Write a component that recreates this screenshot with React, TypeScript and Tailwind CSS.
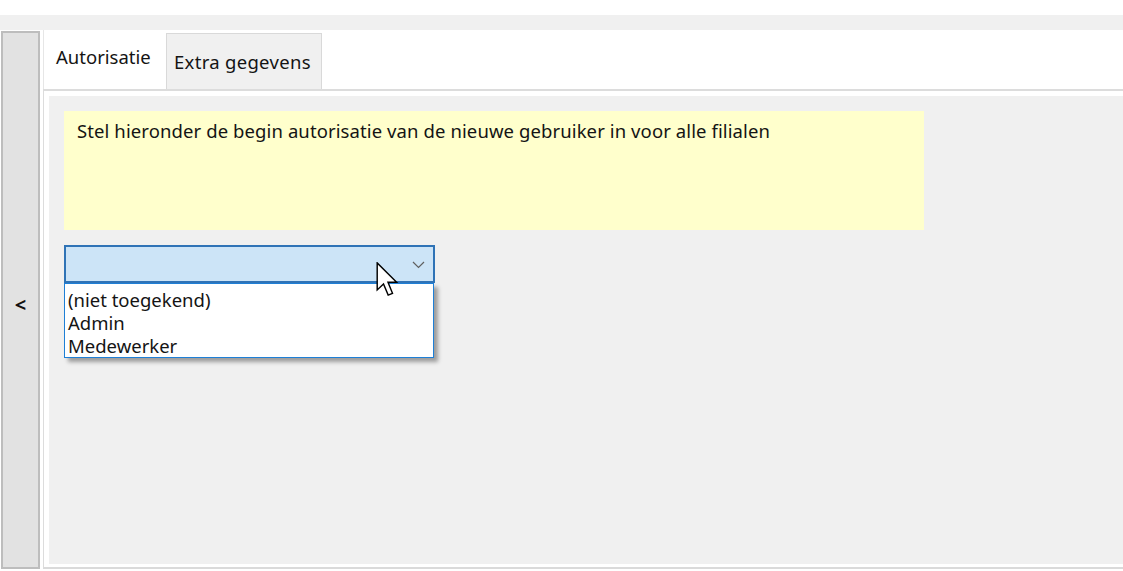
import React from "react";

export default function App() {
  const font = { fontFamily: '"Noto Sans", "Open Sans", Arial, sans-serif' };
  return (
    <div className="w-[1123px] h-[571px] bg-white flex flex-col overflow-hidden text-[#141414]" style={font}>
      <div className="h-[15px] bg-white shrink-0" />
      <div className="h-[15px] bg-[#f0f0f0] shrink-0" />
      <div className="flex flex-1 min-h-0">
        <div className="ml-[1px] mt-[1px] w-[39px] h-[538px] border-2 border-[#bdbdbd] bg-[#e2e2e2] flex items-center justify-center shrink-0">
          <span className="text-[20px] font-bold leading-none text-[#111] mt-[10px]">&lt;</span>
        </div>
        <div className="flex-1 flex flex-col ml-[3px] min-w-0">
          <div className="flex h-[59px] shrink-0 items-stretch">
            <div className="w-[123px] bg-white border-l border-[#e6e6e6] flex items-start pl-[12px] pt-[14px] text-[18.5px] leading-[26px]">
              Autorisatie
            </div>
            <div className="mt-[3px] w-[156px] bg-[#f0f0f0] border border-b-0 border-[#d9d9d9] flex items-start pl-[7px] pt-[15px] text-[18.5px] leading-[26px] tracking-[0.3px] whitespace-nowrap">
              Extra gegevens
            </div>
            <div className="flex-1 bg-white" />
          </div>
          <div className="h-[480px] border-t-2 border-[#dadada] border-l border-[#dcdcdc] border-b-2 border-b-[#dadada] bg-white pl-[5px] pt-[5px] pb-[3px] flex flex-col">
            <div className="flex-1 bg-[#f0f0f0] pl-[15px] pt-[15px]">
              <div className="w-[860px] h-[119px] bg-[#ffffcc] pl-[13px] pt-[7px] text-[18.5px] leading-[26px] tracking-[0.1px] whitespace-nowrap">
                Stel hieronder de begin autorisatie van de nieuwe gebruiker in voor alle filialen
              </div>
              <div className="relative mt-[15px] w-[371px]">
                <div className="h-[38px] border-2 border-[#2f73b6] bg-[#cce4f7] relative">
                  <svg className="absolute right-[8px] top-[14px]" width="13" height="8" viewBox="0 0 13 8">
                    <path d="M1 1 L6.5 6.5 L12 1" fill="none" stroke="#606060" strokeWidth="1.2" />
                  </svg>
                </div>
                <div className="w-[370px] h-[75px] border border-[#1e7fd6] bg-white shadow-[4px_4px_4px_rgba(0,0,0,0.35)] pl-[3px] pt-[4px] text-[18.5px] leading-[23px]">
                  <div>(niet toegekend)</div>
                  <div>Admin</div>
                  <div>Medewerker</div>
                </div>
                <svg className="absolute left-[311px] top-[17px]" width="26" height="36" viewBox="0 0 13 20">
                  <path
                    d="M0.5 0.5 L0.5 15.5 L4 12.2 L6.6 18.4 L9 17.4 L6.5 11.3 L11.3 11.3 Z"
                    fill="#ffffff"
                    stroke="#000000"
                    strokeWidth="0.8"
                    strokeLinejoin="miter"
                  />
                </svg>
              </div>
            </div>
          </div>
        </div>
      </div>
    </div>
  );
}
